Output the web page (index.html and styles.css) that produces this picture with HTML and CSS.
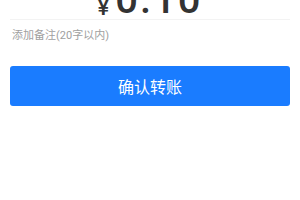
FILE: index.html
```html
<!DOCTYPE html>
<html>
<head>
<meta charset="utf-8">
<link rel="stylesheet" href="styles.css">
</head>
<body>
<div class="page">
  <div class="amount-row">
    <div class="amount"><span class="currency">¥</span><span class="value">0.10</span></div>
  </div>
  <div class="note">添加备注(20字以内)</div>
  <button class="confirm">确认转账</button>
</div>
</body>
</html>
```
FILE: styles.css
```css
html, body {
  margin: 0;
  padding: 0;
  background: #ffffff;
}
.page {
  width: 300px;
  height: 200px;
  overflow: hidden;
  display: flow-root;
  font-family: Roboto, "Noto Sans CJK SC", sans-serif;
}
.amount-row {
  display: flow-root;
  margin: 0 10px;
  height: 19px;
  border-bottom: 1px solid #f3f3f3;
}
.amount {
  display: flex;
  justify-content: center;
  align-items: baseline;
  line-height: 40px;
  height: 40px;
  margin-top: -20px;
  color: #333333;
  gap: 6px;
}
.currency {
  font-size: 22px;
  font-weight: 500;
  position: relative;
  top: 2px;
}
.value {
  font-size: 40px;
  font-weight: 500;
  letter-spacing: 2px;
}
.note {
  margin: 8px 12px 0;
  font-size: 11px;
  line-height: 16px;
  color: #a0a0a0;
}
.confirm {
  display: flex;
  align-items: center;
  justify-content: center;
  margin: 22px 10px 0;
  width: 280px;
  height: 40px;
  border: none;
  border-radius: 3px;
  background: #1a7cff;
  color: #ffffff;
  font-family: "Noto Sans CJK SC", sans-serif;
  font-size: 16px;
  padding: 0;
}
```
